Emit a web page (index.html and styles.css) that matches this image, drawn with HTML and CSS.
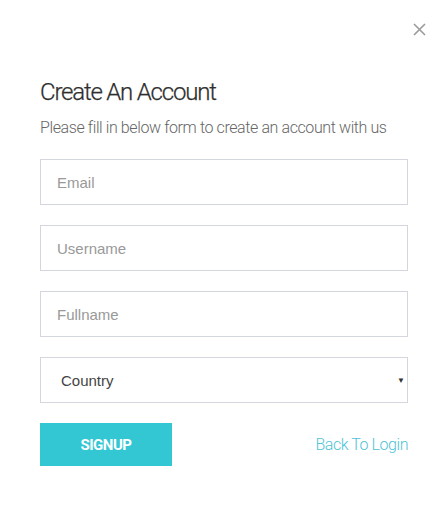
FILE: index.html
```html
<!DOCTYPE html>
<html>
<head>
<meta charset="utf-8">
<link rel="stylesheet" href="styles.css">
</head>
<body>
<div class="modal">
  <button class="close" aria-label="Close">
    <svg width="13" height="13" viewBox="0 0 13 13"><path d="M1 1L12 12M12 1L1 12" stroke="#9a9a9a" stroke-width="1.6"/></svg>
  </button>
  <h1 class="title">Create An Account</h1>
  <p class="subtitle">Please fill in below form to create an account with us</p>
  <form class="form">
    <input class="field" type="text" placeholder="Email">
    <input class="field" type="text" placeholder="Username">
    <input class="field" type="text" placeholder="Fullname">
    <div class="select">
      <span>Country</span>
      <span class="caret">▼</span>
    </div>
    <div class="actions">
      <button type="button" class="signup">SIGNUP</button>
      <a class="back" href="#">Back To Login</a>
    </div>
  </form>
</div>
</body>
</html>
```
FILE: styles.css
```css
html, body {
  margin: 0;
  padding: 0;
  background: #fff;
}
.modal {
  position: relative;
  width: 448px;
  height: 516px;
  box-sizing: border-box;
  padding: 76px 40px 0 40px;
  font-family: Roboto, "Liberation Sans", sans-serif;
}
.close {
  position: absolute;
  top: 23px;
  right: 22px;
  border: 0;
  background: none;
  padding: 0;
  width: 13px;
  height: 13px;
  display: block;
}
.close svg { display: block; }
.title {
  margin: 0;
  font-size: 24px;
  font-weight: 300;
  color: #2e2e2e;
  line-height: 32px;
  letter-spacing: -1.2px;
  -webkit-text-stroke: 0.25px #2e2e2e;
}
.subtitle {
  margin: 9px 0 0 0;
  font-size: 16px;
  font-weight: 300;
  color: #666;
  line-height: 22px;
  letter-spacing: -0.4px;
}
.form {
  margin-top: 20px;
  display: flex;
  flex-direction: column;
  gap: 20px;
}
.field, .select {
  box-sizing: border-box;
  width: 368px;
  height: 46px;
  border: 1px solid #d3d6dc;
  padding: 0 16px;
  font-family: "Liberation Sans", Arial, sans-serif;
  font-size: 15px;
  color: #555;
  outline: none;
  margin: 0;
}
.field::placeholder { color: #999; }
.select {
  display: flex;
  align-items: center;
  justify-content: space-between;
  padding: 0 2px 0 20px;
  color: #444;
}
.caret {
  font-size: 8px;
  color: #333;
}
.actions {
  display: flex;
  align-items: center;
  justify-content: space-between;
}
.signup {
  width: 132px;
  height: 43px;
  border: 0;
  background: #33c6d3;
  color: #fff;
  font-family: Roboto, sans-serif;
  font-weight: 700;
  font-size: 15px;
  letter-spacing: -0.5px;
  padding: 0;
}
.back {
  color: #4fc3d6;
  font-weight: 300;
  font-size: 16px;
  letter-spacing: -0.45px;
  text-decoration: none;
}
```
